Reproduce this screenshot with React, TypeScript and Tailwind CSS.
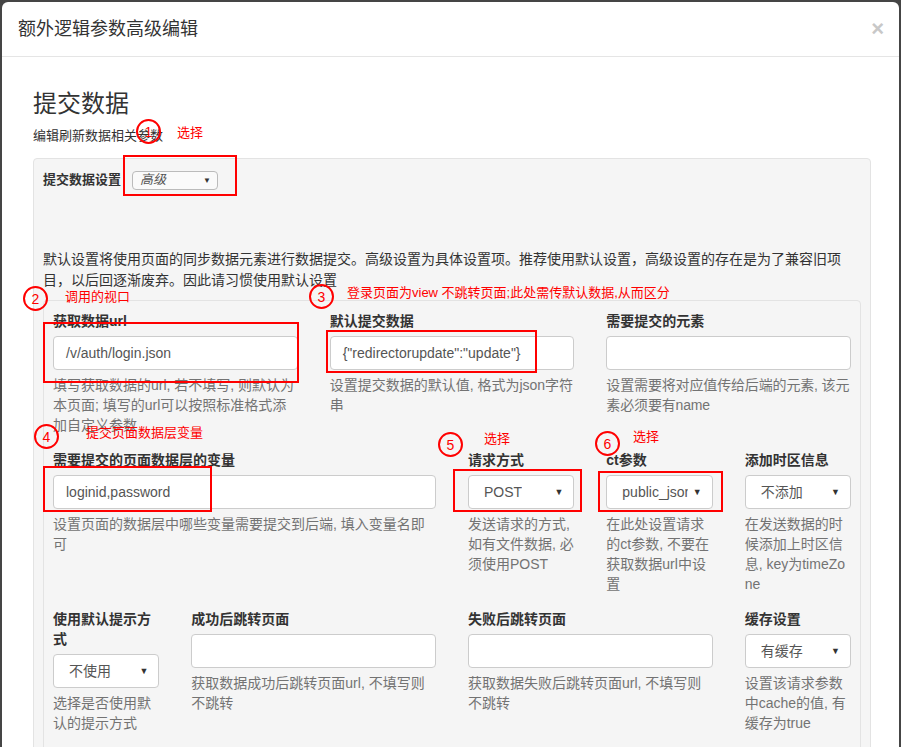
import React from "react";

const FONT = { fontFamily: '"Liberation Sans", "Noto Sans CJK SC", sans-serif' };

interface FieldProps {
  label: string;
  help: string;
  span: string;
  tight?: boolean;
  children: React.ReactNode;
}

const Field: React.FC<FieldProps> = ({ label, help, span, tight, children }) => (
  <div className={span}>
    <div className="text-[14px] leading-[20px] font-bold text-[#333]">{label}</div>
    <div className="mt-[5px]">{children}</div>
    <div
      className={`mt-[5px] text-[14px] leading-[20px] text-[#737373] break-all ${tight ? "tracking-[-0.15px]" : ""}`}
    >
      {help}
    </div>
  </div>
);

const TextInput: React.FC<{ value?: string }> = ({ value }) => (
  <div className="h-[34px] rounded-[4px] border border-[#ccc] bg-white px-3 flex items-center text-[14px] text-[#555] overflow-hidden whitespace-nowrap">
    {value}
  </div>
);

const Select: React.FC<{ value: string }> = ({ value }) => (
  <div className="relative h-[34px] rounded-[4px] border border-[#ccc] bg-white flex items-center text-[14px] text-[#555]">
    <span className="ml-[15px] mr-[24px] overflow-hidden whitespace-nowrap">{value}</span>
    <span className="absolute right-[10px] top-[10px] text-[9px] text-[#333]">▼</span>
  </div>
);

// red annotation marks drawn over the form
const Circle: React.FC<{ x: number; y: number; n: string }> = ({ x, y, n }) => (
  <div
    className="absolute w-[25px] h-[25px] rounded-full border-2 border-[#f00] flex items-center justify-center text-[14px] leading-none text-[#f00]"
    style={{ left: x - 12, top: y - 12 }}
  >
    {n}
  </div>
);

const RedBox: React.FC<{ x: number; y: number; w: number; h: number }> = ({ x, y, w, h }) => (
  <div className="absolute border-2 border-[#f00]" style={{ left: x, top: y, width: w, height: h }} />
);

const RedText: React.FC<{ x: number; y: number; text: string }> = ({ x, y, text }) => (
  <div className="absolute text-[13px] leading-[18px] text-[#f00] whitespace-nowrap" style={{ left: x, top: y - 9 }}>
    {text}
  </div>
);

export default function App() {
  return (
    <div className="relative h-[747px] overflow-hidden bg-[#454545] pt-[2px] pl-[2px]" style={FONT}>
      <div className="w-[897px] bg-white rounded-t-[6px] h-[800px]">
        <div className="h-[55px] pl-[16px] pr-[15px] flex items-center justify-between border-b border-[#e5e5e5]">
          <div className="text-[18px] text-[#333]">额外逻辑参数高级编辑</div>
          <div className="text-[22px] font-bold text-[#c8c8c8] leading-none">×</div>
        </div>

        <div className="pl-[31px] pr-[28px] pt-[34px]">
          <div className="text-[24px] leading-[26px] text-[#333]">提交数据</div>
          <div className="mt-[10px] text-[13px] leading-[18px] text-[#333]">编辑刷新数据相关参数</div>

          <div className="mt-[13px] rounded-[4px] border border-[#e3e3e3] bg-[#f5f5f5] px-[9px] pt-[11px] pb-[40px]">
            <div className="flex items-center gap-[11px]">
              <span className="text-[13px] leading-[20px] font-bold text-[#333]">提交数据设置</span>
              <div className="relative h-[19px] w-[86px] rounded-[4px] border border-[#bbb] bg-[#fafafa] flex items-center">
                <span className="ml-[7px] text-[13px] italic text-[#555]">高级</span>
                <span className="absolute right-[6px] top-[3px] text-[8px] text-[#333]">▼</span>
              </div>
            </div>

            <p className="mt-[59px] text-[14px] leading-[21px] text-[#333]">
              默认设置将使用页面的同步数据元素进行数据提交。高级设置为具体设置项。推荐使用默认设置，高级设置的存在是为了兼容旧项目，以后回逐渐废弃。因此请习惯使用默认设置
            </p>

            <div className="mt-[9px] rounded-[4px] border border-[#e3e3e3] bg-[#f5f5f5] px-[9px] pt-[10px] pb-[60px]">
              <div className="grid grid-cols-12 gap-x-[32px] gap-y-[15px]">
                <Field
                  span="col-span-4"
                  label="获取数据url"
                  help="填写获取数据的url, 若不填写, 则默认为本页面; 填写的url可以按照标准格式添加自定义参数"
                >
                  <TextInput value="/v/auth/login.json" />
                </Field>
                <Field span="col-span-4" label="默认提交数据" help="设置提交数据的默认值, 格式为json字符串">
                  <TextInput value={'{"redirectorupdate":"update"}'} />
                </Field>
                <Field span="col-span-4" tight label="需要提交的元素" help="设置需要将对应值传给后端的元素, 该元素必须要有name">
                  <TextInput />
                </Field>

                <Field
                  span="col-span-6"
                  label="需要提交的页面数据层的变量"
                  help="设置页面的数据层中哪些变量需要提交到后端, 填入变量名即可"
                >
                  <TextInput value="loginid,password" />
                </Field>
                <Field span="col-span-2" label="请求方式" help="发送请求的方式, 如有文件数据, 必须使用POST">
                  <Select value="POST" />
                </Field>
                <Field span="col-span-2" label="ct参数" help="在此处设置请求的ct参数, 不要在获取数据url中设置">
                  <Select value="public_json" />
                </Field>
                <Field span="col-span-2" label="添加时区信息" help="在发送数据的时候添加上时区信息, key为timeZone">
                  <Select value="不添加" />
                </Field>

                <Field span="col-span-2" label="使用默认提示方式" help="选择是否使用默认的提示方式">
                  <Select value="不使用" />
                </Field>
                <Field span="col-span-4" label="成功后跳转页面" help="获取数据成功后跳转页面url, 不填写则不跳转">
                  <TextInput />
                </Field>
                <Field span="col-span-4" label="失败后跳转页面" help="获取数据失败后跳转页面url, 不填写则不跳转">
                  <TextInput />
                </Field>
                <Field span="col-span-2" label="缓存设置" help="设置该请求参数中cache的值, 有缓存为true">
                  <Select value="有缓存" />
                </Field>
              </div>
            </div>
          </div>
        </div>
      </div>

      <Circle x={148} y={131} n="1" />
      <RedText x={177} y={133} text="选择" />
      <RedBox x={123} y={155} w={114} h={41} />

      <Circle x={35} y={298} n="2" />
      <RedText x={65} y={297} text="调用的视口" />
      <Circle x={321} y={296} n="3" />
      <RedText x={347} y={293} text="登录页面为view 不跳转页面;此处需传默认数据,从而区分" />
      <RedBox x={43} y={322} w={256} h={61} />
      <RedBox x={326} y={330} w={211} h={43} />

      <Circle x={46} y={436} n="4" />
      <RedText x={86} y={433} text="提交页面数据层变量" />
      <RedBox x={43} y={466} w={169} h={46} />

      <Circle x={450} y={444} n="5" />
      <RedText x={484} y={439} text="选择" />
      <RedBox x={453} y={469} w={129} h={43} />

      <Circle x={607} y={443} n="6" />
      <RedText x={633} y={437} text="选择" />
      <RedBox x={598} y={471} w={125} h={41} />
    </div>
  );
}
